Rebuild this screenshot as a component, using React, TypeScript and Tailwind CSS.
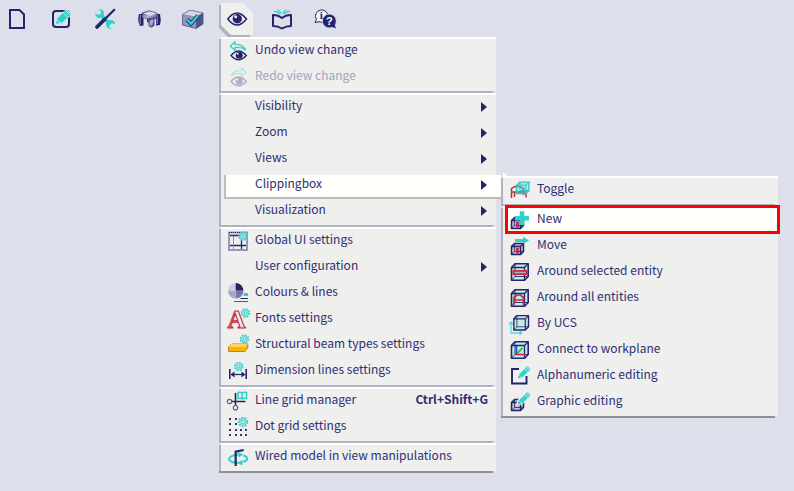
import React from "react";

const NAVY = "#24246c";
const TEAL = "#2dd2cb";
const RED = "#c02c3c";

interface IconProps {
  children: React.ReactNode;
}

const Icon = ({ children }: IconProps) => (
  <svg viewBox="0 0 20 20" fill="none" className="block size-5 shrink-0 overflow-visible" aria-hidden="true">
    {children}
  </svg>
);

/* Shared pieces */
const Gear = ({ x, y, r = 4 }: { x: number; y: number; r?: number }) => (
  <g stroke="#43cfc9">
    <circle cx={x} cy={y} r={r} strokeWidth="1.6" strokeDasharray="2 1.1" />
    <circle cx={x} cy={y} r={r - 1} strokeWidth="0.9" fill="#bdeeea" />
    <circle cx={x} cy={y} r={r - 2.7} strokeWidth="1" fill="#efefed" />
  </g>
);

const Pencil = () => (
  <g>
    <path d="M7 12.4 8 8.6 14.8 1.8 18 5 11 11.6Z" fill={TEAL} />
    <path d="m14.8 1.8 1-.9q.8-.5 1.5.2l1.3 1.2q.6.7 0 1.4l-.7 1.3Z" fill="#8be3df" stroke={TEAL} strokeWidth=".8" />
    <path d="m13.5 2.6 3.4 3.3M8.2 9l2.5 2.4" stroke="#d5f5f2" strokeWidth=".8" />
  </g>
);

const SmallCube = () => (
  <g stroke={NAVY} strokeWidth="1.5" strokeLinejoin="round">
    <path d="M1.5 10.5 4.500 7.500h9v8l-3 3h-9Z" fill="#b9bed2" />
    <path d="M1.500 10.500h9v8M10.500 10.500l3-3" strokeWidth="1.300" />
    <path d="M4.500 7.500v8h9M1.500 18.500l3-3" strokeWidth=".8" />
  </g>
);

const Cube = () => (
  <g stroke={NAVY} strokeLinejoin="round">
    <path d="M1.500 5.500 5 1.800h13.200v12.700L14.500 18.200h-13Z" fill="#c5e8e8" strokeWidth="1.600" />
    <path d="M1.500 5.500h13v12.700M14.500 5.500l3.700-3.700" strokeWidth="1.300" />
    <path d="M5 1.800v12.700h13.200M1.500 18.200 5 14.500" strokeWidth=".9" />
  </g>
);

const EyeArrow = ({ redo = false }: { redo?: boolean }) => (
  <Icon>
    <g opacity={redo ? 0.32 : 1}>
      <path
        d="M2.3 5.2 7 .8v2.6c5 0 8.800 1.300 10.600 5.300-3-2.200-6.500-2.600-10.600-2.200v2.700Z"
        stroke={TEAL}
        strokeWidth="1.3"
        strokeLinejoin="round"
        transform={redo ? "translate(20.500 0) scale(-1 1)" : undefined}
      />
      <path d="M3 14.500q7.500-9 15.300 0-7.800 8.400-15.300 0Z" stroke={NAVY} strokeWidth="1.4" fill="#efefed" />
      <circle cx="11.200" cy="14.300" r="3.500" fill={NAVY} />
      <circle cx="9.600" cy="12.700" r="1" fill="#efefed" />
    </g>
  </Icon>
);

const GlobalUiIcon = () => (
  <Icon>
    <rect x="1" y="1.500" width="18" height="17.500" stroke="#8f8fba" strokeWidth="1.800" />
    <path d="M2 4.500h11M2 14.500h16M13.500 7v11" stroke={NAVY} strokeWidth="1.300" />
    <path d="M5.500 5v13" stroke="#8f8fba" strokeWidth="1" />
    <path d="M1 1.500h11" stroke={NAVY} strokeWidth="1.200" strokeDasharray="1 1" />
    <Gear x={15} y={5} />
  </Icon>
);

const ColoursIcon = () => (
  <Icon>
    <path d="M7.700 7.700V0a7.700 7.700 0 0 0-7.700 7.700Z" fill="#cccce0" />
    <path d="M7.700 7.700V0a7.700 7.700 0 0 1 7.700 7.700Z" fill={NAVY} />
    <path d="M7.700 7.700h7.700a7.700 7.700 0 0 1-7.700 7.700Z" fill="#7777a9" />
    <path d="M7.700 7.700H0a7.700 7.700 0 0 0 7.700 7.700Z" fill="#a7a7ca" />
    <path d="M15.500 11.500H20" stroke={TEAL} strokeWidth="3" />
    <path d="M12.500 15.500H20" stroke={NAVY} />
    <path d="M6 18.500h14" stroke={RED} />
  </Icon>
);

const FontsIcon = () => (
  <Icon>
    <text
      x="8.500"
      y="19"
      textAnchor="middle"
      fontSize="25"
      fontWeight="bold"
      fontFamily="Liberation Serif, serif"
      stroke={RED}
      strokeWidth="1.100"
      fill="#efefed"
    >
      A
    </text>
    <Gear x={17.500} y={4} />
  </Icon>
);

const BeamIcon = () => (
  <Icon>
    <path d="M.5 12 3.500 9h16.300v4l-3 3.500H.5Z" fill="#fbb500" stroke="#b07a20" strokeWidth=".9" strokeLinejoin="round" />
    <path d="M.5 12 3.500 9h16.300l-3 3Z" fill="#ffd45c" />
    <Gear x={16.500} y={4} />
  </Icon>
);

const DimensionIcon = () => (
  <Icon>
    <path d="M1.800 8v10M18.200 8v10" stroke={NAVY} strokeWidth="1.600" />
    <path d="M3 13.500h14" stroke={NAVY} strokeWidth="1.200" />
    <path d="m2.500 13.500 4-3v6ZM17.500 13.500l-4-3v6Z" fill={NAVY} />
    <Gear x={10.700} y={5.500} />
  </Icon>
);

const LineGridIcon = () => (
  <Icon>
    <path d="M3.500 10.500h14M7.500 2v12.500" stroke={NAVY} strokeWidth="1.600" />
    <circle cx="1.500" cy="10.500" r="2.200" stroke="#5c5c94" strokeWidth="1.200" />
    <circle cx="7.500" cy="16.700" r="2.200" stroke="#5c5c94" strokeWidth="1.200" />
    <path d="M10 1.500q2.500-.8 4 .6 1.500-1.400 4.500-.6v6q-3-.8-4.500.5-1.500-1.300-4-.5ZM14 2v6" stroke={TEAL} strokeWidth="1.500" />
  </Icon>
);

const DotGridIcon = () => (
  <Icon>
    {[1, 6, 12, 17].map((y) =>
      [1, 7, 12, 17].map((x) => <rect key={`${x}-${y}`} x={x} y={y} width="2" height="2" fill="#36367a" />)
    )}
    <circle cx="15" cy="5" r="5.300" fill="#efefed" />
    <Gear x={15} y={5} r={4.400} />
  </Icon>
);

const WiredIcon = () => (
  <Icon>
    <path d="M11 7.500C5 7.800 1 9.800 1 12c0 2.500 5 4.200 10 3.800M15.500 8.500c2.500.8 4 2 3.800 3.500-.2 1.300-1.800 2.200-4 3" stroke={TEAL} strokeWidth="1.900" />
    <path d="m14.500 12.800-5 2.900 5 2.800ZM10.500 5l5 2.700-5 2.800Z" fill={TEAL} />
    <path d="M7.700 19V4.700L15.700 3" stroke={NAVY} strokeWidth="2.200" />
  </Icon>
);

const ToggleIcon = () => (
  <Icon>
    <path d="M1.500 18V8.500q5.500-4.500 12 0V15M1.500 12h14.500v5.500M4.500 17v-5" stroke={RED} strokeWidth="1.500" />
    <path d="M6.500 5.200 10 2.200h9v8.300l-3.200 3H6.500Z" fill="#39d6cf" fillOpacity=".4" stroke="#2ac8c1" strokeWidth="1.300" />
    <path d="M6.500 5.200h9.300v8.300M15.800 5.200l3.200-3M10 2.200v8.300h9" stroke="#2ac8c1" />
  </Icon>
);

const NewIcon = () => (
  <Icon>
    <SmallCube />
    <path d="M7.500 12v5.500" stroke={RED} strokeWidth="2.800" />
    <path d="M12 1.300V15M5 8.200h14" stroke={TEAL} strokeWidth="4.500" />
  </Icon>
);

const MoveIcon = () => (
  <Icon>
    <SmallCube />
    <path d="M7.500 12v5.500" stroke={RED} strokeWidth="2.800" />
    <path d="M5 3h8V.8l6 3.700-6 3.500V6H5Z" fill={TEAL} />
  </Icon>
);

const AroundSelectedIcon = () => (
  <Icon>
    <Cube />
    <path d="M3.500 8.800h13.200v3.400H3.500Z" fill="#aeb5c9" stroke={RED} strokeWidth="1.800" />
  </Icon>
);

const AroundAllIcon = () => (
  <Icon>
    <Cube />
    <path d="M4 17V9.500L7 7h3.500l3 2.500V17M4 12h9.500" stroke={RED} strokeWidth="1.700" />
  </Icon>
);

const UcsIcon = () => (
  <Icon>
    <g transform="translate(2.500 0) scale(.88)">
      <Cube />
    </g>
    <path d="M1 9v10h10M-1 10.500 1 8l2 2.500M9.500 17l2.300 2-2.300 2" stroke="#55dcd6" strokeWidth="1.300" />
  </Icon>
);

const WorkplaneIcon = () => (
  <Icon>
    <Cube />
    <path d="M6.500 14V6" stroke="#2340e8" strokeWidth="1.500" />
    <path d="m7 13.500 5.500-5.500" stroke="#22c83c" strokeWidth="1.800" />
    <path d="M6.500 14.500H15" stroke="#e02424" strokeWidth="1.600" />
  </Icon>
);

const AlphanumericIcon = () => (
  <Icon>
    <path d="M9 3H2v14.500h14.500V10" stroke={NAVY} strokeWidth="1.900" />
    <g transform="translate(1 0)">
      <Pencil />
    </g>
  </Icon>
);

const GraphicIcon = () => (
  <Icon>
    <SmallCube />
    <path d="m7 12.400 1-3.800L14.800 1.800 18.500 5l-7 7Z" stroke="#efefed" strokeWidth="1.500" />
    <g transform="translate(1 0)">
      <Pencil />
    </g>
  </Icon>
);

/* Toolbar icons */
const NewFileIcon = () => (
  <Icon>
    <path d="M3 1h9.500L17 5.500V19H3Z" stroke={NAVY} strokeWidth="2" />
  </Icon>
);

const EditIcon = () => (
  <Icon>
    <rect x="2" y="2" width="16" height="16" rx="3" stroke={NAVY} strokeWidth="2" />
    <g stroke="#dddfea" strokeWidth="1">
      <path d="m4.500 15.500 1-5.500L14 1.500q1-1.300 2.200-.3l3.300 3.300q1 1-.2 2.200L11 14Z" fill={TEAL} />
    </g>
    <path d="m12.500 4 3.800 4M15 2l3.500 3.700M5.700 10.800l3.600 3.400" stroke="#c3f1ee" strokeWidth="1" />
  </Icon>
);

const ToolsIcon = () => (
  <Icon>
    <path d="m5.500 5.500 10 10" stroke={TEAL} strokeWidth="3.500" />
    <path
      d="M3.500 0Q9 0 9 5q-.5 4-5 4Q.5 8.500 0 4l3.300 2L6 4.500 5.800 2ZM17 19.700q-6 .5-6-4.700.5-4 5-4 4 .5 4.200 4.800L16.800 14 14 15.500l.2 2.500Z"
      fill={TEAL}
    />
    <path d="m19.300.8-9.300 9.200" stroke={NAVY} strokeWidth="2.200" strokeLinecap="round" />
    <path d="m9.500 10.500-7.500 7.500" stroke={NAVY} strokeWidth="3.800" strokeLinecap="round" />
  </Icon>
);

const JointIcon = () => (
  <Icon>
    <defs>
      <linearGradient id="steel" x1="0" x2="1" y1="0" y2="1">
        <stop offset="0" stopColor="#24246c" />
        <stop offset=".5" stopColor="#b9bad2" />
        <stop offset="1" stopColor="#24246c" />
      </linearGradient>
    </defs>
    <path d="M0 5h4.500v11.500L1 17q-3-6-1-12ZM17 5h4q1.500 6 0 11l-4 .5Z" fill={NAVY} />
    <path d="M1.500 6q-1 5 0 9.500M18.200 6v9" stroke="#8485b3" strokeWidth="1.200" />
    <path d="m3 4 7-2.300L18 4v5l-6 2-9-2.500Z" fill="url(#steel)" stroke={NAVY} strokeWidth=".5" />
    <path d="m4 4.500 6-2 7.500 2-6 2.200Z" fill="#d9dae8" />
    <path d="M8.500 10H15v6.500L12.500 18l-2.500-1v-4H8.500Z" fill="url(#steel)" stroke={NAVY} strokeWidth=".8" />
  </Icon>
);

const CheckCubeIcon = () => (
  <Icon>
    <path d="M-.5 5.500 7 1.200 20 4v11l-7 4.500L-.5 16Z" fill="#9898bd" stroke="#5a5a91" strokeWidth=".9" />
    <path d="M-.5 5.500 7 1.200 20 4l-7 4Z" fill="#d4d5e5" stroke="#7777a5" strokeWidth=".6" />
    <path d="m13 8 7-4v11l-7 4.500Z" fill="#51518e" />
    <path d="m4 10.500 4 4.200L15 6.500" stroke={NAVY} strokeWidth="4" />
    <path d="m4 10.500 4 4.200L15 6.500" stroke={TEAL} strokeWidth="2.500" />
  </Icon>
);

const EyeIcon = () => (
  <Icon>
    <path d="M.8 10q9.200-12 18.700 0-9.500 12-18.700 0Z" stroke={NAVY} strokeWidth="1.500" />
    <circle cx="10.300" cy="9.700" r="4.700" fill={NAVY} />
    <circle cx="8.700" cy="7.800" r="1.500" fill="#efefed" />
  </Icon>
);

const BookIcon = () => (
  <Icon>
    <path d="M2 6q5-.3 9 3 4-3.300 9-3v11q-5 0-9 2.500Q7 17 2 17Z" stroke={NAVY} strokeWidth="2" strokeLinejoin="round" />
    <path d="M3 2.300q4-.3 6 3M6.500.8q2.500.8 3.700 4M19 2.300q-4-.3-6 3M15.500.8Q13 1.600 11.800 4.800" stroke={TEAL} strokeWidth="1.200" />
  </Icon>
);

const HelpIcon = () => (
  <Icon>
    <path d="M1.500 10.500 0 13.500l4-.8a6.200 6.200 0 1 0-2.500-2.200Z" fill="#f4f4fa" stroke={NAVY} strokeWidth="1" />
    <circle cx="14.300" cy="12" r="7" fill={NAVY} stroke="#dddfea" strokeWidth=".8" />
    <path d="m16 17.500 5 2-1.800-5Z" fill={NAVY} />
    <text x="6.300" y="10" textAnchor="middle" fontSize="11" fontWeight="bold" fontFamily="Liberation Serif, serif" fill={NAVY}>
      i
    </text>
    <text x="14.300" y="16" textAnchor="middle" fontSize="11" fontWeight="bold" fontFamily="Liberation Sans, sans-serif" fill="#fff">
      ?
    </text>
  </Icon>
);

interface Item {
  label: string;
  icon?: React.ReactNode;
  shortcut?: string;
  disabled?: boolean;
  outlined?: boolean;
  submenu?: Item[][];
  hasSubmenu?: boolean;
}

const clippingGroups: Item[][] = [
  [{ label: "Toggle", icon: <ToggleIcon /> }],
  [
    { label: "New", icon: <NewIcon />, outlined: true },
    { label: "Move", icon: <MoveIcon /> },
    { label: "Around selected entity", icon: <AroundSelectedIcon /> },
    { label: "Around all entities", icon: <AroundAllIcon /> },
    { label: "By UCS", icon: <UcsIcon /> },
    { label: "Connect to workplane", icon: <WorkplaneIcon /> },
    { label: "Alphanumeric editing", icon: <AlphanumericIcon /> },
    { label: "Graphic editing", icon: <GraphicIcon /> },
  ],
];

const viewGroups: Item[][] = [
  [
    { label: "Undo view change", icon: <EyeArrow /> },
    { label: "Redo view change", icon: <EyeArrow redo />, disabled: true },
  ],
  [
    { label: "Visibility", hasSubmenu: true },
    { label: "Zoom", hasSubmenu: true },
    { label: "Views", hasSubmenu: true },
    { label: "Clippingbox", hasSubmenu: true, submenu: clippingGroups },
    { label: "Visualization", hasSubmenu: true },
  ],
  [
    { label: "Global UI settings", icon: <GlobalUiIcon /> },
    { label: "User configuration", hasSubmenu: true },
    { label: "Colours & lines", icon: <ColoursIcon /> },
    { label: "Fonts settings", icon: <FontsIcon /> },
    { label: "Structural beam types settings", icon: <BeamIcon /> },
    { label: "Dimension lines settings", icon: <DimensionIcon /> },
  ],
  [
    { label: "Line grid manager", icon: <LineGridIcon />, shortcut: "Ctrl+Shift+G" },
    { label: "Dot grid settings", icon: <DotGridIcon /> },
  ],
  [{ label: "Wired model in view manipulations", icon: <WiredIcon /> }],
];

const MenuItem = ({ item }: { item: Item }) => (
  <li role="none" className="relative">
    {item.submenu && (
      <div className="absolute top-0.5 bottom-0 left-[3px] -right-[5px] border-b-2 border-l-2 border-[#bcbcbc] bg-[#fffffb]" />
    )}
    {item.outlined && (
      <div className="absolute -top-[3px] bottom-0 left-0.5 -right-0.5 border-3 border-[#ff0000] bg-[#fffffb]" />
    )}
    <button
      type="button"
      role="menuitem"
      disabled={item.disabled}
      aria-haspopup={item.hasSubmenu ? "menu" : undefined}
      aria-expanded={item.submenu ? true : undefined}
      className="relative flex h-[26px] w-full items-start pt-px pr-2 pl-[7px] text-left text-[#2e2e75] disabled:text-[#a3a3c0]"
    >
      <span className="mt-px mr-[7px] flex w-5 shrink-0">{item.icon}</span>
      <span className="flex-1 leading-[18px] whitespace-nowrap">{item.label}</span>
      {item.shortcut && <span className="leading-[18px] font-bold">{item.shortcut}</span>}
      {item.hasSubmenu && (
        <svg viewBox="0 0 6 10" className="mt-1.5 mr-px h-[10px] w-[6px]" aria-hidden="true">
          <path d="M0 0 6 5 0 10Z" fill={NAVY} />
        </svg>
      )}
    </button>
    {item.submenu && (
      <div className="absolute top-[3px] left-full z-10 ml-[5px]">
        <svg viewBox="0 0 6 6" className="absolute -top-1 left-0.5 size-[6px]" aria-hidden="true">
          <path d="M0 0 6 6H0Z" fill="#fff" />
        </svg>
        <Menu groups={item.submenu} label={item.label} />
      </div>
    )}
  </li>
);

const Menu = ({ groups, label }: { groups: Item[][]; label: string }) => (
  <div role="menu" aria-label={label} className="w-[277px]">
    {groups.map((group, i) => (
      <div key={i}>
        <div className="ml-0.5 h-0.5 bg-white" />
        <ul role="group" className="border-l-2 border-[#b0b2c0] bg-[#efefed]">
          {group.map((item) => (
            <MenuItem key={item.label} item={item} />
          ))}
        </ul>
        <div className={`mr-[3px] h-0.5 ${i === groups.length - 1 ? "bg-[#8d8f99]" : "bg-[#b0b2c0]"}`} />
      </div>
    ))}
  </div>
);

const tools = [
  { name: "File", icon: <NewFileIcon /> },
  { name: "Edit", icon: <EditIcon /> },
  { name: "Tools", icon: <ToolsIcon /> },
  { name: "Structure", icon: <JointIcon /> },
  { name: "Check", icon: <CheckCubeIcon /> },
  { name: "View", icon: <EyeIcon />, active: true },
  { name: "Library", icon: <BookIcon /> },
  { name: "Help", icon: <HelpIcon /> },
];

const App = () => {
  return (
    <div className="min-h-screen bg-[#dddfea] font-['Noto_Sans_CJK_SC',sans-serif] text-xs">
      <nav aria-label="Main toolbar" className="flex h-[37px] items-center gap-5 pl-[5px]">
        {tools.map((tool) => (
          <button
            key={tool.name}
            type="button"
            aria-label={tool.name}
            aria-expanded={tool.active}
            className="relative flex h-full w-6 items-center justify-center"
          >
            {tool.active && (
              <svg viewBox="0 0 34 34" className="absolute top-[3px] -left-1.5 size-[34px]" aria-hidden="true">
                <path d="M0 2v23l9 9h22v-3H11L2 22V2Z" fill="#b0b2c0" />
                <path d="M2 0h22l10 10v22H12L2 22Z" fill="#efefed" />
              </svg>
            )}
            <span className="relative">{tool.icon}</span>
          </button>
        ))}
      </nav>
      <div className="ml-[219px] w-[277px]">
        <Menu groups={viewGroups} label="View" />
      </div>
    </div>
  );
};

export default App;
